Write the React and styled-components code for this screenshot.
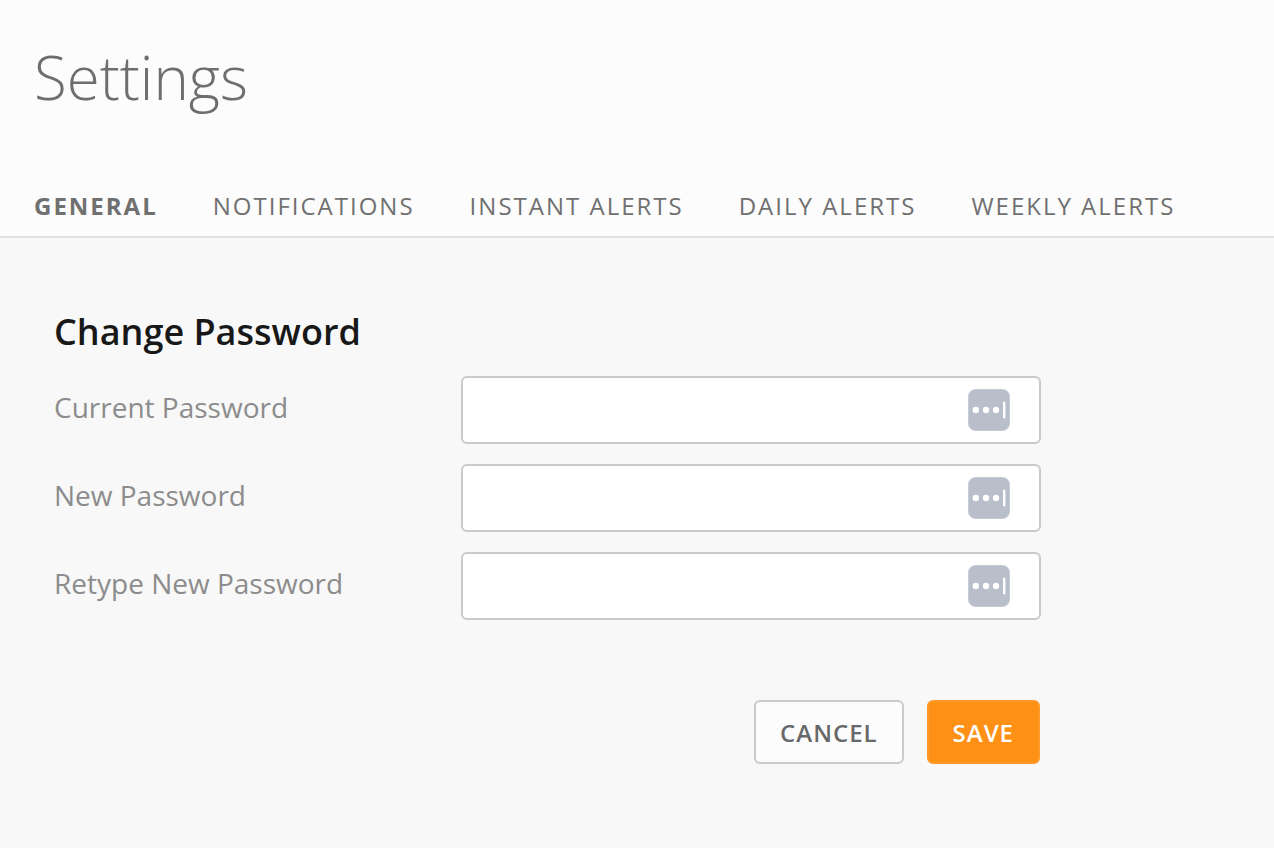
import React from "react";
import styled, { createGlobalStyle } from "styled-components";

const GlobalStyle = createGlobalStyle`
  *, *::before, *::after { box-sizing: border-box; }
  body {
    margin: 0;
    background: #f8f8f8;
    color: #6e6e6e;
    font-family: "Open Sans", "Noto Sans", sans-serif;
  }
`;

const Header = styled.header`
  padding: 39px 34px 0;
  background: #fcfcfc;
  border-bottom: 2px solid #e2e2e2;
`;

const Title = styled.h1`
  margin: 0;
  font-size: 60px;
  line-height: 76px;
  font-weight: 300;
`;

const Tabs = styled.nav`
  display: flex;
  gap: 55px;
  margin-top: 75px;
`;

const Tab = styled.a`
  padding-bottom: 14px;
  font-size: 24px;
  line-height: 32px;
  letter-spacing: 2px;
  font-weight: ${(p) => (p.$active ? 700 : 400)};
  color: #707070;
  text-decoration: none;
  text-transform: uppercase;
  white-space: nowrap;
`;

const Form = styled.form`
  max-width: 1041px;
  padding: 68px 0 80px 54px;
`;

const SectionTitle = styled.h2`
  margin: 0 0 18px;
  color: #181818;
  font-size: 36px;
  line-height: 52px;
  font-weight: 600;
`;

const Fields = styled.div`
  display: grid;
  gap: 20px;
`;

const Field = styled.div`
  display: grid;
  grid-template-columns: 407px 1fr;
`;

const Label = styled.label`
  padding-top: 11px;
  color: #8c8c8c;
  font-size: 28px;
  line-height: 40px;
`;

const InputBox = styled.div`
  position: relative;
`;

const Input = styled.input`
  display: block;
  width: 100%;
  height: 68px;
  padding: 0 84px 0 20px;
  border: 2px solid #cacaca;
  border-radius: 6px;
  background: #fff;
  color: #333;
  font: inherit;
  font-size: 28px;
`;

const KeyIcon = styled.svg`
  position: absolute;
  top: 13px;
  right: 31px;
  width: 42px;
  height: 42px;
`;

const Actions = styled.div`
  display: flex;
  justify-content: flex-end;
  gap: 23px;
  margin-top: 80px;
  padding-right: 1px;
`;

const Button = styled.button`
  height: 64px;
  padding: 0 24px;
  border: 2px solid ${(p) => (p.$primary ? "#ff9a28" : "#cacaca")};
  border-radius: 6px;
  background: ${(p) => (p.$primary ? "#fd9015" : "#fcfcfc")};
  color: ${(p) => (p.$primary ? "#fff" : "#686868")};
  font: inherit;
  font-size: 24px;
  font-weight: 600;
  letter-spacing: 1px;
  text-transform: uppercase;
`;

const tabs = ["General", "Notifications", "Instant Alerts", "Daily Alerts", "Weekly Alerts"];

const fields = [
  { id: "current", label: "Current Password" },
  { id: "new", label: "New Password" },
  { id: "retype", label: "Retype New Password" },
];

function PasswordField({ id, label }) {
  return (
    <Field>
      <Label htmlFor={id}>{label}</Label>
      <InputBox>
        <Input id={id} type="password" />
        <KeyIcon viewBox="0 0 42 42" aria-hidden="true">
          <rect x="0.5" y="0.5" width="41" height="41" rx="7" fill="#b8bfca" stroke="#c6ccd5" />
          <g fill="#fff">
            <circle cx="7.8" cy="21" r="3.2" />
            <circle cx="18" cy="21" r="3.2" />
            <circle cx="28" cy="21" r="3.2" />
            <rect x="35" y="12.5" width="2.4" height="17" rx="1.2" />
          </g>
        </KeyIcon>
      </InputBox>
    </Field>
  );
}

export default function App() {
  return (
    <>
      <GlobalStyle />
      <Header>
        <Title>Settings</Title>
        <Tabs>
          {tabs.map((tab, i) => (
            <Tab key={tab} href="#" $active={i === 0}>{tab}</Tab>
          ))}
        </Tabs>
      </Header>
      <main>
        <Form>
          <SectionTitle>Change Password</SectionTitle>
          <Fields>
            {fields.map((f) => <PasswordField key={f.id} {...f} />)}
          </Fields>
          <Actions>
            <Button type="button">Cancel</Button>
            <Button type="submit" $primary>Save</Button>
          </Actions>
        </Form>
      </main>
    </>
  );
}
